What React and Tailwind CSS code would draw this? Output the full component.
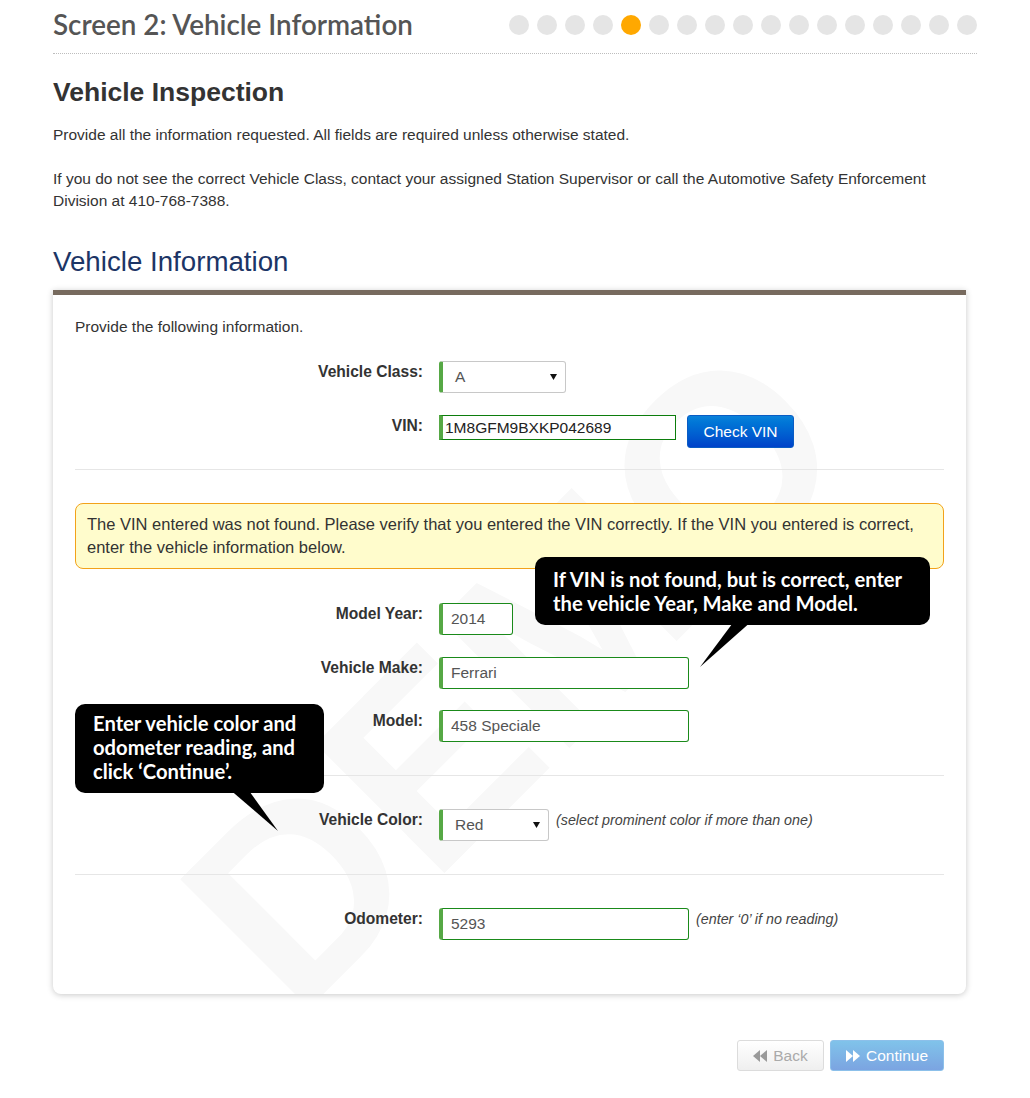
import React from 'react';

const steps = Array.from({ length: 17 }, (_, i) => i);

function Caret() {
  return (
    <svg width="7" height="6" viewBox="0 0 7 6" className="shrink-0">
      <polygon points="0,0 7,0 3.5,6" fill="#111" />
    </svg>
  );
}

function Row({ label, children, className = '' }) {
  return (
    <div className={`flex items-start ${className}`}>
      <div className="w-[348px] shrink-0 pt-[1px] text-right text-[15.6px] font-bold leading-[20px] text-[#333]">{label}</div>
      <div className="ml-[16px] flex items-start">{children}</div>
    </div>
  );
}

function TextBox({ value, width }) {
  return (
    <input
      readOnly
      value={value}
      className={`${width} h-[32px] rounded-[3px] border border-[#1a8a1a] border-l-[4px] border-l-[#56a845] bg-white pl-[8px] text-[15.5px] text-[#555] outline-none`}
    />
  );
}

function SelectBox({ value, width }) {
  return (
    <div className={`${width} flex h-[32px] items-center justify-between rounded-[3px] border border-[#c8c8c8] border-l-[4px] border-l-[#56a845] bg-white pl-[12px] pr-[8px] text-[15.5px] text-[#555]`}>
      <span>{value}</span>
      <Caret />
    </div>
  );
}

function Hint({ children }) {
  return <span className="ml-[7px] text-[14.3px] italic leading-[22px] text-[#444]">{children}</span>;
}

function Divider() {
  return <div className="h-px bg-[#e6e6e6]" />;
}

function TwoArrows({ dir, color }) {
  const pts = dir === 'left'
    ? ['7,0 7,12 0,6', '14,0 14,12 7,6']
    : ['0,0 0,12 7,6', '7,0 7,12 14,6'];
  return (
    <svg width="14" height="12" viewBox="0 0 14 12">
      {pts.map(p => <polygon key={p} points={p} fill={color} />)}
    </svg>
  );
}

export default function App() {
  return (
    <div className="relative min-h-[1098px] bg-white font-['Liberation_Sans',Arial,sans-serif] text-[#333]">
      <div className="w-[977px] pl-[53px]">
        {/* header */}
        <div className="flex h-[54px] items-center justify-between border-b border-dotted border-[#bdbdbd] pb-[3px]">
          <h1 className="font-['Lato',sans-serif] text-[27.8px] font-semibold text-[#555]">Screen 2: Vehicle Information</h1>
          <div className="flex gap-[8px]">
            {steps.map(i => (
              <div key={i} className={`h-[20px] w-[20px] rounded-full ${i === 4 ? 'bg-[#ffa800]' : 'bg-[#e5e5e5]'}`} />
            ))}
          </div>
        </div>

        <h2 className="mt-[24px] text-[26.5px] font-bold leading-[29px] text-[#333]">Vehicle Inspection</h2>
        <p className="mt-[17px] text-[15.5px] leading-[22px]">Provide all the information requested. All fields are required unless otherwise stated.</p>
        <p className="mt-[22px] pr-[30px] text-[15.5px] leading-[22px]">
          If you do not see the correct Vehicle Class, contact your assigned Station Supervisor or call the Automotive Safety Enforcement Division at 410-768-7388.
        </p>

        <h2 className="mt-[34px] text-[27.7px] leading-[31px] text-[#1c3566]">Vehicle Information</h2>

        {/* card */}
        <div className="relative mt-[13px] w-[913px] overflow-hidden rounded-b-[8px] border-t-[5px] border-t-[#776a5e] bg-white shadow-[0_1px_6px_rgba(0,0,0,0.22)]">
          <div className="pointer-events-none absolute left-[460px] top-[380px] -translate-x-1/2 -translate-y-1/2 -rotate-45 select-none text-[265px] font-bold leading-none text-[#f8f8f8]">
            DEMO
          </div>

          <div className="relative px-[22px] pb-[54px] pt-[21px]">
            <p className="text-[15.5px] leading-[22px]">Provide the following information.</p>

            <Row label="Vehicle Class:" className="mt-[23px]">
              <SelectBox value="A" width="w-[127px]" />
            </Row>

            <Row label="VIN:" className="mt-[22px]">
              <input
                readOnly
                value="1M8GFM9BXKP042689"
                className="h-[25px] w-[237px] border border-[#0c7d0c] border-l-[4px] border-l-[#56a845] bg-white pl-[2px] text-[15.5px] text-[#222] outline-none"
              />
              <button className="ml-[11px] h-[33px] w-[107px] rounded-[3px] border border-[#0a5cc4] bg-gradient-to-b from-[#0b82da] to-[#0042c9] text-[15.5px] text-white">
                Check VIN
              </button>
            </Row>

            <div className="mt-[21px]"><Divider /></div>

            <div className="mt-[33px] rounded-[8px] border border-[#f2a21a] bg-[#fffccc] px-[11px] py-[9px] text-[16.5px] leading-[23px] text-[#333]">
              The VIN entered was not found. Please verify that you entered the VIN correctly. If the VIN you entered is correct, enter the vehicle information below.
            </div>

            <Row label="Model Year:" className="mt-[34px]">
              <TextBox value="2014" width="w-[74px]" />
            </Row>
            <Row label="Vehicle Make:" className="mt-[22px]">
              <TextBox value="Ferrari" width="w-[250px]" />
            </Row>
            <Row label="Model:" className="mt-[21px]">
              <TextBox value="458 Speciale" width="w-[250px]" />
            </Row>

            <div className="mt-[33px]"><Divider /></div>

            <Row label="Vehicle Color:" className="mt-[33px]">
              <SelectBox value="Red" width="w-[110px]" />
              <Hint>(select prominent color if more than one)</Hint>
            </Row>

            <div className="mt-[33px]"><Divider /></div>

            <Row label="Odometer:" className="mt-[33px]">
              <TextBox value="5293" width="w-[250px]" />
              <Hint>(enter ‘0’ if no reading)</Hint>
            </Row>
          </div>
        </div>

        {/* nav buttons */}
        <div className="mt-[46px] flex w-[913px] justify-end gap-[6px] pr-[22px]">
          <button className="flex h-[31px] w-[87px] items-center justify-center gap-[6px] rounded-[3px] border border-[#dcdcdc] bg-gradient-to-b from-[#ffffff] to-[#efefef] text-[15.5px] text-[#aaa]">
            <TwoArrows dir="left" color="#9a9a9a" /> Back
          </button>
          <button className="flex h-[31px] w-[114px] items-center justify-center gap-[6px] rounded-[3px] border border-[#8cc0ea] bg-gradient-to-b from-[#80c3ea] to-[#7ba4e1] text-[15.5px] text-white">
            <TwoArrows dir="right" color="#ffffff" /> Continue
          </button>
        </div>
      </div>

      {/* callouts */}
      <div className="absolute left-[535px] top-[557px] w-[395px] rounded-[10px] bg-black px-[18px] pb-[10px] pt-[10px] font-['Lato',sans-serif] text-[20.2px] font-bold leading-[24px] text-white">
        If VIN is not found, but is correct, enter the vehicle Year, Make and Model.
      </div>
      <svg className="absolute left-[695px] top-[620px]" width="65" height="50" viewBox="0 0 65 50">
        <polygon points="40,0 58,0 5,47" fill="#000" />
      </svg>

      <div className="absolute left-[75px] top-[704px] w-[249px] rounded-[10px] bg-black px-[18px] pb-[10px] pt-[7px] font-['Lato',sans-serif] text-[20.2px] font-bold leading-[24px] text-white">
        Enter vehicle color and odometer reading, and click ‘Continue’.
      </div>
      <svg className="absolute left-[220px] top-[788px]" width="65" height="48" viewBox="0 0 65 48">
        <polygon points="8,0 27,0 58,43" fill="#000" />
      </svg>
    </div>
  );
}
